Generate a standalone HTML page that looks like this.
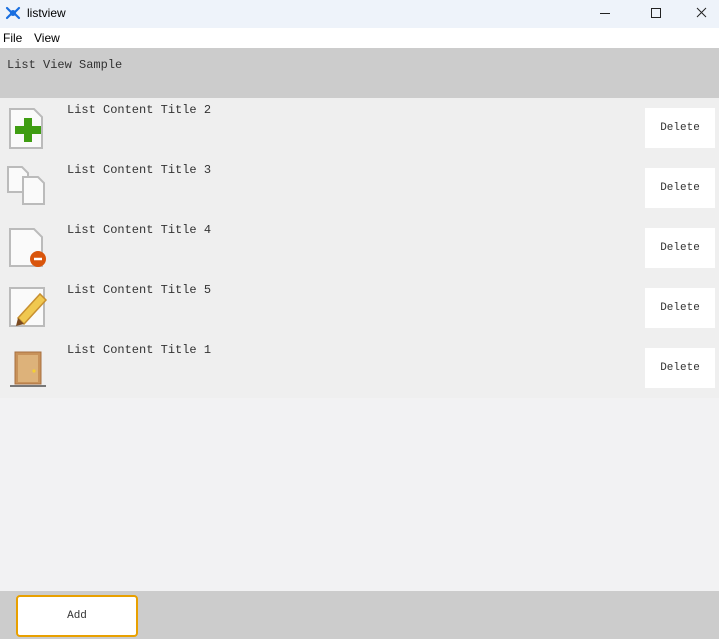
<!DOCTYPE html>
<html><head><style>
*{margin:0;padding:0;box-sizing:border-box}
body{width:719px;height:639px;overflow:hidden;background:#f2f2f3;position:relative;font-family:"Liberation Mono",monospace;font-size:12px;color:#333}
.abs{position:absolute}
.title{left:0;top:0;width:719px;height:28px;background:#eef3fa;font-family:"Liberation Sans",sans-serif;font-size:12px;color:#000}
.menu{left:0;top:28px;width:719px;height:20px;background:#fff;font-family:"Liberation Sans",sans-serif;font-size:12px;color:#000}
.hdr{left:0;top:48px;width:719px;height:50px;background:#cccccc}
.row{left:0;width:719px;height:60px;background:#efefef}
.row .t{position:absolute;left:67px;top:5px;color:#333}
.row .d{position:absolute;left:645px;top:10px;width:70px;height:40px;background:#fff;text-align:center;line-height:40px;font-size:11px}
.row svg{position:absolute;left:6px;top:6px}
.foot{left:0;top:591px;width:719px;height:48px;background:#cccccc}
.add{left:16px;top:595px;width:122px;height:42px;background:#fff;border:2px solid #e8a000;border-radius:4px;text-align:center;line-height:38px;font-size:11px}
</style></head><body>
<div class="abs title">
<svg class="abs" style="left:5px;top:5px" width="16" height="16" viewBox="0 0 16 16"><g stroke="#1a6fe0" stroke-width="2.2" fill="none" stroke-linecap="round"><path d="M2 3 L6 7 M14 3 L10 7 M2 13 L6 9 M14 13 L10 9"/></g><circle cx="8" cy="8" r="3" fill="#1a6fe0"/></svg>
<span class="abs" style="left:27px;top:6px">listview</span>
<svg class="abs" style="left:600px;top:5px" width="110" height="16" viewBox="0 0 110 16"><path d="M0 8.5H10" stroke="#222" stroke-width="1"/><rect x="51.5" y="3.5" width="9" height="9" fill="none" stroke="#222"/><path d="M97 3L106 12M106 3L97 12" stroke="#222"/></svg>
</div>
<div class="abs menu"><span class="abs" style="left:3px;top:3px">File</span><span class="abs" style="left:34px;top:3px">View</span></div>
<div class="abs hdr"><span class="abs" style="left:7px;top:10px">List View Sample</span></div>

<div class="abs row" style="top:98px">
<svg width="44" height="46" viewBox="0 0 44 46"><path d="M4 5H28L36 13V44H4Z" fill="#fafafa" stroke="#bbb" stroke-width="2"/><path d="M18 14H26V22H35V30H26V38H18V30H9V22H18Z" fill="#3f9d12"/></svg>
<span class="t">List Content Title 2</span><div class="d">Delete</div></div>
<div class="abs row" style="top:158px">
<svg width="44" height="46" viewBox="0 0 44 46"><path d="M2 3H16L22 9V28H2Z" fill="#fafafa" stroke="#bbb" stroke-width="2"/><path d="M17 13H32L38 19V40H17Z" fill="#fafafa" stroke="#bbb" stroke-width="2"/></svg>
<span class="t">List Content Title 3</span><div class="d">Delete</div></div>
<div class="abs row" style="top:218px">
<svg width="44" height="46" viewBox="0 0 44 46"><path d="M4 5H28L36 13V42H4Z" fill="#fafafa" stroke="#bbb" stroke-width="2"/><circle cx="32" cy="35" r="8" fill="#d9550c"/><path d="M28 35H36" stroke="#fff" stroke-width="2.5"/></svg>
<span class="t">List Content Title 4</span><div class="d">Delete</div></div>
<div class="abs row" style="top:278px">
<svg width="44" height="46" viewBox="0 0 44 46"><path d="M4 4H38V42H4Z" fill="#fafafa" stroke="#bbb" stroke-width="2"/><path d="M12 34L34 10L40 16L18 40Z" fill="#f0c850" stroke="#c89030" stroke-width="1.5"/><path d="M12 34L10 42L18 40Z" fill="#7a4a20"/></svg>
<span class="t">List Content Title 5</span><div class="d">Delete</div></div>
<div class="abs row" style="top:338px">
<svg width="44" height="46" viewBox="0 0 44 46"><rect x="9" y="8" width="26" height="32" fill="#c8925a" stroke="#a87040"/><rect x="12" y="11" width="20" height="27" fill="#ddb27a"/><circle cx="28" cy="27" r="1.6" fill="#f5d030"/><path d="M4 42H40" stroke="#777" stroke-width="2"/></svg>
<span class="t">List Content Title 1</span><div class="d">Delete</div></div>

<div class="abs foot"></div>
<div class="abs add">Add</div>
</body></html>
